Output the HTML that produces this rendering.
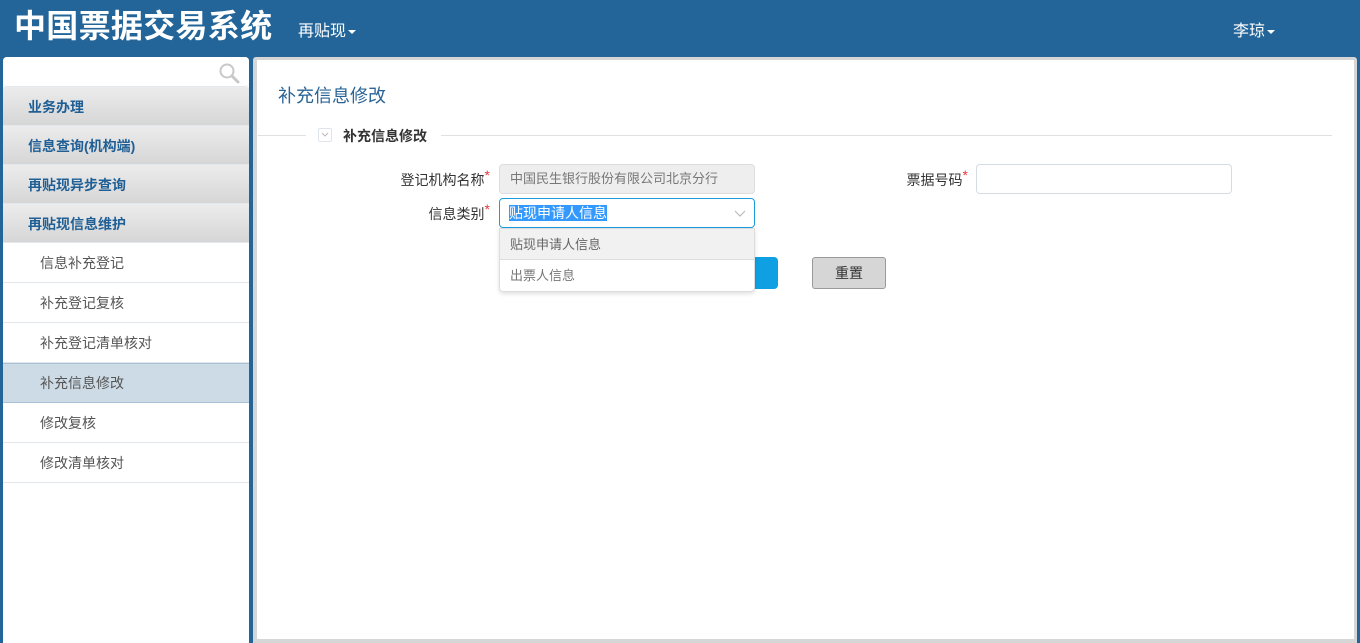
<!DOCTYPE html>
<html><head><meta charset="utf-8"><style>
*{margin:0;padding:0;box-sizing:border-box}
body{width:1360px;height:643px;background:#236598;font-family:"Liberation Sans","Noto Sans CJK SC",sans-serif;position:relative;overflow:hidden;font-size:14px}
.a{position:absolute}
.caret{display:inline-block;width:0;height:0;border-left:4px solid transparent;border-right:4px solid transparent;border-top:4px solid #fff;vertical-align:middle;margin-left:2px}
.top{left:3px;width:246px;height:39px;background:linear-gradient(#ececec,#d6d6d6);border-bottom:1px solid #e3e8ee;color:#1f5f95;font-weight:bold;font-size:14px;line-height:40px;padding-left:25px}
.sub{left:3px;width:246px;height:40px;background:#fff;border-bottom:1px solid #e1e6ec;color:#555;font-size:14px;line-height:40px;padding-left:37px}
.lbl{color:#333;font-size:14px;text-align:right}
.star{color:#e4393c;font-size:14px;position:relative;top:-5px}
</style></head><body>
<div class="a" style="left:14px;top:6px;color:#fff;font-size:32px;font-weight:bold;line-height:40px;letter-spacing:0.3px">中国票据交易系统</div>
<div class="a" style="left:298px;top:20px;color:#fff;font-size:16px;line-height:24px">再贴现<span class="caret"></span></div>
<div class="a" style="left:1233px;top:20px;color:#fff;font-size:16px;line-height:24px">李琼<span class="caret"></span></div>

<div class="a" style="left:3px;top:57px;width:246px;height:586px;background:#fff;border-radius:4px 4px 0 0"></div>
<div class="a" style="left:3px;top:57px;width:246px;height:30px;background:#fff;border-radius:4px;border-bottom:1px solid #e3e8ee"></div>
<svg class="a" style="left:218px;top:62px" width="22" height="22" viewBox="0 0 22 22"><circle cx="9" cy="9" r="6.5" fill="none" stroke="#c8c8c8" stroke-width="2"/><line x1="14" y1="14" x2="20" y2="20" stroke="#c8c8c8" stroke-width="3" stroke-linecap="round"/></svg>
<div class="a top" style="top:87px">业务办理</div>
<div class="a top" style="top:126px">信息查询(机构端)</div>
<div class="a top" style="top:165px">再贴现异步查询</div>
<div class="a top" style="top:204px">再贴现信息维护</div>
<div class="a sub" style="top:243px">信息补充登记</div>
<div class="a sub" style="top:283px">补充登记复核</div>
<div class="a sub" style="top:323px">补充登记清单核对</div>
<div class="a sub" style="top:363px;background:#cddbe6;border-top:1px solid #a9c1d6;border-bottom:1px solid #a9c1d6;line-height:38px">补充信息修改</div>
<div class="a sub" style="top:403px">修改复核</div>
<div class="a sub" style="top:443px">修改清单核对</div>

<div class="a" style="left:253px;top:57px;width:1104px;height:586px;background:#d6d6d6;border-radius:3px 3px 0 0"></div>
<div class="a" style="left:257px;top:60px;width:1097px;height:579px;background:#fff"></div>
<div class="a" style="left:278px;top:84px;color:#2a6496;font-size:18px;line-height:24px">补充信息修改</div>
<div class="a" style="left:258px;top:135px;width:48px;height:1px;background:#e0e0e0"></div>
<div class="a" style="left:441px;top:135px;width:891px;height:1px;background:#e0e0e0"></div>
<div class="a" style="left:318px;top:128px;width:14px;height:14px;border:1px solid #dfe4ea;border-radius:2px"><svg width="12" height="12" style="display:block"><polyline points="3,4 6,7 9,4" fill="none" stroke="#bbb" stroke-width="1"/></svg></div>
<div class="a" style="left:343px;top:126px;font-weight:bold;color:#333;font-size:14px;line-height:20px">补充信息修改</div>

<div class="a lbl" style="left:380px;top:170px;width:110px">登记机构名称<span class="star">*</span></div>
<div class="a" style="left:499px;top:164px;width:256px;height:30px;background:#eee;border:1px solid #ddd;border-radius:4px;color:#777;font-size:13px;line-height:28px;padding-left:10px">中国民生银行股份有限公司北京分行</div>
<div class="a lbl" style="left:880px;top:170px;width:88px">票据号码<span class="star">*</span></div>
<div class="a" style="left:976px;top:164px;width:256px;height:30px;background:#fff;border:1px solid #d5dbe3;border-radius:4px"></div>

<div class="a lbl" style="left:380px;top:204px;width:110px">信息类别<span class="star">*</span></div>
<div class="a" style="left:499px;top:198px;width:256px;height:30px;background:#fff;border:1px solid #1a9de0;border-radius:4px;line-height:28px;padding-left:9px"><span style="background:#3399ff;color:#fff;font-size:14px">贴现申请人信息</span>
<svg style="position:absolute;right:8px;top:11px" width="12" height="8"><polyline points="1,1 6,6 11,1" fill="none" stroke="#bbb" stroke-width="1.2"/></svg></div>

<div class="a" style="left:743px;top:257px;width:35px;height:32px;background:#0ea0e3;border-radius:0 4px 4px 0"></div>
<div class="a" style="left:812px;top:257px;width:74px;height:32px;background:#d6d6d6;border:1px solid #999;border-radius:3px;color:#333;font-size:14px;line-height:30px;text-align:center">重置</div>

<div class="a" style="left:499px;top:228px;width:256px;height:64px;background:#fff;border:1px solid #ddd;border-radius:0 0 4px 4px;box-shadow:0 2px 4px rgba(0,0,0,.12)">
<div style="height:31px;background:#f1f1f1;border-bottom:1px solid #ddd;color:#666;font-size:13px;line-height:31px;padding-left:10px">贴现申请人信息</div>
<div style="height:31px;color:#777;font-size:13px;line-height:31px;padding-left:10px">出票人信息</div>
</div>
</body></html>
